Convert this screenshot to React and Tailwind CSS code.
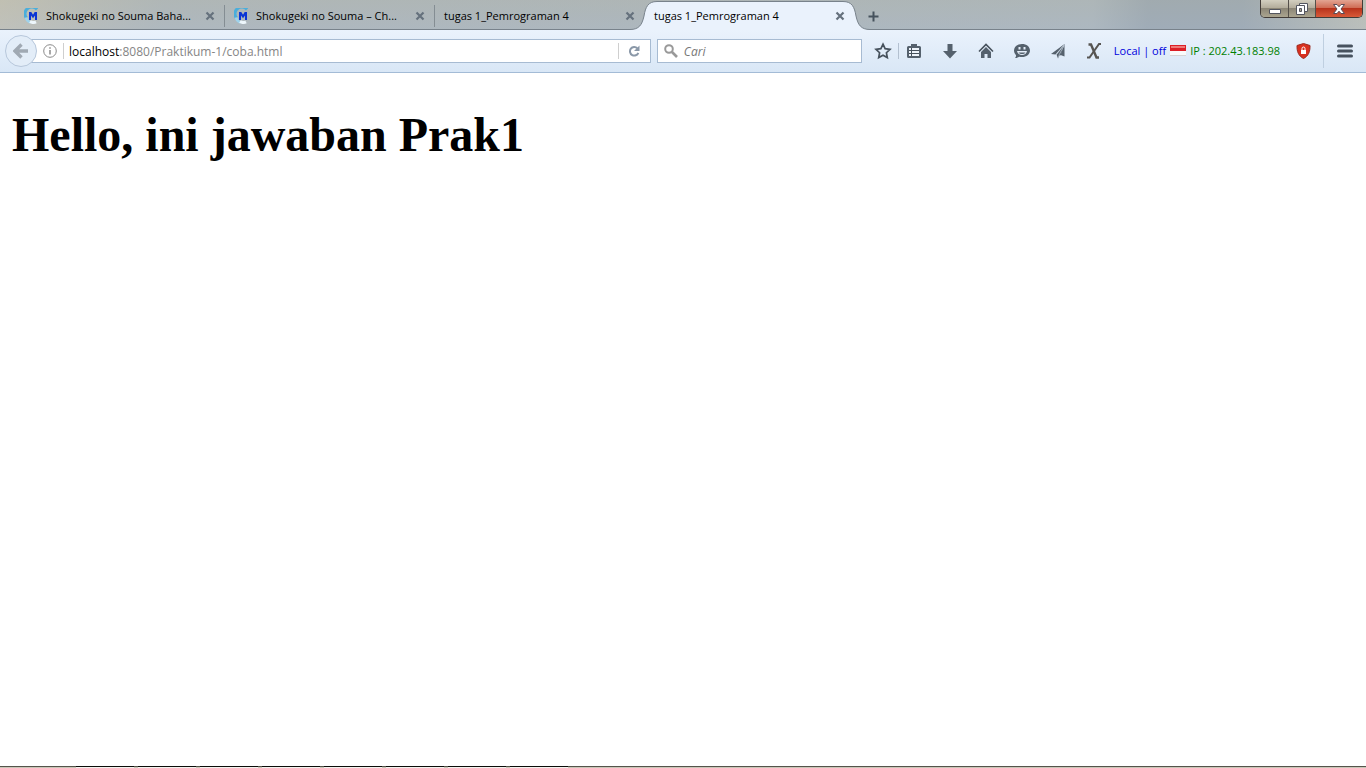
import React from "react";

function SiteIcon() {
  return (
    <svg width="16" height="16" viewBox="0 0 16 16" className="shrink-0" aria-hidden="true">
      <path d="M13 1.500A6.500 6.500 0 0 0 2.500 10" fill="none" stroke="#4aaedb" strokeWidth="3" />
      <path d="M2 9.500a7 7 0 0 0 4.500 5" fill="none" stroke="#9fd3ec" strokeWidth="2.600" />
      <path d="M6 13.500a6 6 0 0 0 6 .3" fill="none" stroke="#eef7fc" strokeWidth="3" />
      <path d="M5 4h2.300l1.700 2.700L10.700 4H13v8h-2V7.500L9 10.300 7 7.500V12H5z" fill="#0b35d6" />
    </svg>
  );
}

function CloseIcon() {
  return (
    <svg width="10" height="10" viewBox="0 0 10 10" aria-hidden="true">
      <path d="M1.500 1.500l7 7M8.500 1.500l-7 7" stroke="#65717d" strokeWidth="2.200" />
    </svg>
  );
}

function Tab({ title, icon, active, divider }) {
  return (
    <div className="relative flex h-full w-[210px] items-center">
      {active && (
        <svg width="240" height="30" viewBox="0 0 240 30" className="absolute top-0 -left-[15px]" aria-hidden="true">
          <path d="M0 30V29.500C9 29.500 12 25 14 16C15.500 7 18 1.500 27 1.500H213C222 1.500 224.500 7 226 16C228 25 231 29.500 240 29.500V30Z" fill="#eaf2fc" />
          <path d="M0 29.500C9 29.500 12 25 14 16C15.500 7 18 1.500 27 1.500H213C222 1.500 224.500 7 226 16C228 25 231 29.500 240 29.500" fill="none" stroke="#78828b" />
        </svg>
      )}
      <button role="tab" aria-selected={!!active} className="relative flex h-full min-w-0 flex-1 items-center gap-1.5 pt-0.5 pl-[9px] text-left">
        {icon && <SiteIcon />}
        <span className="whitespace-nowrap">{title}</span>
      </button>
      <button aria-label="Tutup tab" className="relative mt-0.5 mr-2.5 flex size-2.5 items-center justify-center">
        <CloseIcon />
      </button>
      {divider && <span className="absolute top-[5px] right-0 h-[22px] w-px bg-[#848d93]" />}
    </div>
  );
}

const tools = [
  {
    label: "Daftar bacaan",
    art: (
      <>
        <path d="M1 4.500A1.500 1.500 0 0 1 2.500 3H5V1h6v2h2.500A1.500 1.500 0 0 1 15 4.500v9a1.500 1.500 0 0 1-1.500 1.500h-11A1.500 1.500 0 0 1 1 13.500z" />
        <path d="M3 5h10v8H3z" fill="#eef4fb" />
        <path d="M3 7.500h10M3 10.500h10M5.500 5v8" stroke="#47525d" strokeWidth="1" />
      </>
    ),
  },
  { label: "Unduhan", art: <path d="M5.500 1h5v7H15l-7 7.500L1 8h4.500z" /> },
  {
    label: "Beranda",
    art: (
      <>
        <path d="M1 8.500l7-7 7 7" fill="none" stroke="#47525d" strokeWidth="1.600" />
        <path d="M3 9l5-5 5 5v6H9.500v-4h-3v4H3z" />
      </>
    ),
  },
  {
    label: "Obrolan",
    art: (
      <>
        <path d="M8 1c4.500 0 8 2.700 8 6.500S12.500 14 8 14c-1 0-2 0-2.800-.3C4 14.700 2.500 15 1 15c.8-.8 1.200-1.700 1-2.800A6 6 0 0 1 0 7.500C0 3.700 3.500 1 8 1z" />
        <path d="M3 8h10C12.500 10.500 10.500 12 8 12s-4.500-1.500-5-4z" fill="#e6effa" />
        <path d="M4.500 9.500h7c-.8 1-2 1.500-3.500 1.500s-2.700-.5-3.500-1.500z" />
        <path d="M4.500 4h2v2.500h-2zM9.500 4h2v2.500h-2z" fill="#e6effa" />
      </>
    ),
  },
  {
    label: "Bagikan",
    art: (
      <>
        <path d="M14.500 1L1 11l4.500.5z" />
        <path d="M14.500 1v12.500l-4-1.500z" />
        <path d="M14.500 1L6.500 11.500 8 15.500l1.500-3 1.300-.3z" />
        <path d="M14 2L6.500 11.500M8.500 14.500l.8-3L14 2.500" fill="none" stroke="#d5e0ec" strokeWidth="0.600" />
      </>
    ),
  },
];

const segments = [0, 1, 2, 3, 4, 5, 6, 7];

export default function App() {
  return (
    <div className="flex min-h-screen flex-col bg-white font-['Open_Sans','Noto_Sans',sans-serif] text-[12px] leading-4 text-black">
      <header>
        <div className="flex h-[30px] items-start justify-between border-b border-[#78828b] bg-[linear-gradient(180deg,#b2b7b280_0%,#b0bac480_100%),linear-gradient(90deg,#cfc8b2_0%,#adb6ba_12%,#aab4b9_50%,#a9b5bd_80%,#8f9eac_84%,#8f9eac_91%,#c5c5b6_100%)]">
          <div role="tablist" className="flex h-[30px] items-center pl-[15px] text-[11px]">
            <Tab title="Shokugeki no Souma Baha..." icon divider />
            <Tab title="Shokugeki no Souma – Ch..." icon divider />
            <Tab title="tugas 1_Pemrograman 4" />
            <Tab title="tugas 1_Pemrograman 4" active />
            <button aria-label="Tab baru" className="mt-0.5 ml-3 flex size-3 items-center justify-center">
              <svg width="11" height="11" viewBox="0 0 11 11" aria-hidden="true">
                <path d="M5.500 0.500v10M0.500 5.500h10" stroke="#46525d" strokeWidth="2" />
              </svg>
            </button>
          </div>
          <div className="mr-[3px] flex h-[18px] overflow-hidden rounded-b-[5px] border border-t-0 border-[#423c38]">
            <button aria-label="Kecilkan" className="flex w-[27px] items-center justify-center bg-[linear-gradient(180deg,#d3cfc0_0%,#b4ad9c_45%,#8c8676_50%,#aaa48f_100%)]">
              <svg width="14" height="14" viewBox="0 0 14 14" aria-hidden="true">
                <path d="M1.500 7.500h11v4h-11z" fill="#fff" stroke="#54565f" />
              </svg>
            </button>
            <button aria-label="Pulihkan" className="flex w-7 items-center justify-center border-x border-[#55504a] bg-[linear-gradient(180deg,#d3cfc0_0%,#b4ad9c_45%,#8c8676_50%,#aaa48f_100%)]">
              <svg width="14" height="14" viewBox="0 0 14 14" aria-hidden="true">
                <path d="M4.500 1.500h8v8h-8z" fill="#fff" stroke="#54565f" />
                <path d="M1.500 3.500h8v9h-8z" fill="#fff" stroke="#54565f" />
                <path d="M4.500 6.500h2v3h-2z" fill="#aaa48f" stroke="#54565f" />
              </svg>
            </button>
            <button aria-label="Tutup" className="flex w-[46px] items-center justify-center bg-[linear-gradient(180deg,#e3a492_0%,#d06d56_45%,#b8331c_50%,#d85a38_100%)]">
              <svg width="14" height="14" viewBox="0 0 14 14" aria-hidden="true">
                <path d="M1.500 2.500h3.500l2 2.300 2-2.300h3.500L9 7l3.500 4.500H9L7 9.200 5 11.500H1.500L5 7z" fill="#fff" stroke="#5b4b55" />
              </svg>
            </button>
          </div>
        </div>

        <nav className="flex h-[43px] items-center border-b border-[#a3bbd6] bg-[linear-gradient(180deg,#eaf2fc_0%,#d9e7f6_100%)] pl-[5px]">
          <button aria-label="Kembali" className="relative z-10 -mr-1.5 flex size-8 shrink-0 items-center justify-center rounded-full border border-[#b7c7db] bg-[#e3edf8]">
            <svg width="16" height="16" viewBox="0 0 16 16" aria-hidden="true">
              <path d="M8.500 1.500L2 8l6.500 6.500M2 8h13" fill="none" stroke="#a0a9b3" strokeWidth="3.400" />
            </svg>
          </button>
          <div className="flex h-6 min-w-0 flex-1 items-center border border-[#a7bbd2] bg-white pl-[11px]">
            <svg width="14" height="14" viewBox="0 0 14 14" className="shrink-0" aria-hidden="true">
              <circle cx="7" cy="7" r="6.300" fill="none" stroke="#8b8b8b" />
              <path d="M7 6v4.500M7 3.300v1.500" stroke="#8b8b8b" strokeWidth="1.500" />
            </svg>
            <span className="mr-[5px] ml-1.5 h-4 w-px shrink-0 bg-[#cfcfcf]" />
            <a href="http://localhost:8080/Praktikum-1/coba.html" className="flex-1 truncate pt-0.5 text-[#858585]">
              <span className="text-black">localhost</span>:8080/Praktikum-1/coba.html
            </a>
            <button aria-label="Muat ulang" className="flex h-4 w-8 shrink-0 items-center justify-center border-l border-[#cfcfcf]">
              <svg width="12" height="12" viewBox="0 0 12 12" aria-hidden="true">
                <path d="M9.300 3.200A4.300 4.300 0 1 0 10.300 7.800" fill="none" stroke="#8a98a8" strokeWidth="2" />
                <path d="M11.500 0.500v5.500H6z" fill="#8a98a8" />
              </svg>
            </button>
          </div>
          <label className="mr-3 ml-1.5 flex h-6 w-[205px] shrink-0 items-center gap-1.5 border border-[#a7bbd2] bg-white pl-1.5">
            <svg width="14" height="14" viewBox="0 0 14 14" className="shrink-0" aria-hidden="true">
              <circle cx="5" cy="5" r="3.800" fill="none" stroke="#999" strokeWidth="2" />
              <path d="M8 8l5 5" stroke="#999" strokeWidth="2.600" />
            </svg>
            <input aria-label="Cari" placeholder="Cari" className="w-full min-w-0 bg-transparent pt-0.5 outline-none placeholder:text-[#777] placeholder:italic" />
          </label>
          <button aria-label="Markah" className="flex w-[18px] shrink-0 items-center justify-center">
            <svg width="18" height="18" viewBox="0 0 18 18" aria-hidden="true">
              <path d="M9 2.200l2.100 4.500 4.900.6-3.600 3.400.9 4.900L9 13.200l-4.300 2.400.9-4.900L2 7.300l4.900-.6z" fill="none" stroke="#47525d" strokeWidth="1.700" />
            </svg>
          </button>
          <span className="mr-[7px] ml-1.5 h-4 w-px bg-[#b3c0d0]" />
          <div className="flex items-center gap-5">
            {tools.map((tool) => (
              <button key={tool.label} aria-label={tool.label} className="flex size-4 items-center justify-center">
                <svg width="16" height="16" viewBox="0 0 16 16" fill="#55616d" aria-hidden="true">
                  {tool.art}
                </svg>
              </button>
            ))}
            <button aria-label="Ekstensi X" className="flex size-4 items-center justify-center">
              <svg width="16" height="16" viewBox="0 0 16 16" fill="none" stroke="#575552" aria-hidden="true">
                <path d="M2.500 1.500H5L10.500 14.500H13" strokeWidth="2.400" />
                <path d="M15 1H13L3.500 14.500H1" strokeWidth="2" />
              </svg>
            </button>
          </div>
          <div className="ml-3 flex items-center gap-1 text-[11px] whitespace-nowrap">
            <span className="text-[#0000dd]">Local | off</span>
            <svg width="16" height="12" viewBox="0 0 16 12" aria-hidden="true">
              <path d="M0 0h16v6H0z" fill="#dc1f26" />
              <path d="M1 1h14v2H1z" fill="#ee7a78" />
              <path d="M0 6h16v5H0z" fill="#fafafa" />
              <path d="M0 10h16v1H0z" fill="#d5d5d5" />
            </svg>
            <span className="text-[#008000]">IP : 202.43.183.98</span>
          </div>
          <button aria-label="Perlindungan" className="mr-3 ml-4 shrink-0">
            <svg width="15" height="16" viewBox="0 0 15 16" aria-hidden="true">
              <path d="M7.500 0.500L14 2.500c.2 6-1.500 10.500-6.500 13C2.500 13 .8 8.500 1 2.500z" fill="#d9301f" stroke="#9c2a20" />
              <path d="M5 7h5v4H5z" fill="#fff" />
              <path d="M6 7V5.500a1.500 1.500 0 0 1 3 0V7" fill="none" stroke="#fff" />
            </svg>
          </button>
          <button aria-label="Menu" className="flex h-[34px] w-[43px] shrink-0 items-center justify-center border-l border-[#bfcfe0]">
            <svg width="16" height="14" viewBox="0 0 16 14" aria-hidden="true">
              <path d="M1.500 2h13M1.500 7h13M1.500 12h13" stroke="#47525f" strokeWidth="3" strokeLinecap="round" />
            </svg>
          </button>
        </nav>
      </header>
      <main className="flex-1 px-3 pt-[34px]">
        <h1 className="font-['Liberation_Serif',serif] text-[48px] leading-[56px] font-bold">Hello, ini jawaban Prak1</h1>
      </main>
      <footer className="flex h-0.5 bg-[linear-gradient(180deg,#55534a_50%,#c9c7b8_50%)] pl-[76px]">
        {segments.map((n) => (
          <span key={n} className="mr-1 w-[58px] bg-[linear-gradient(180deg,#0c0c0a_50%,#f4f3ee_50%)]" />
        ))}
      </footer>
    </div>
  );
}
